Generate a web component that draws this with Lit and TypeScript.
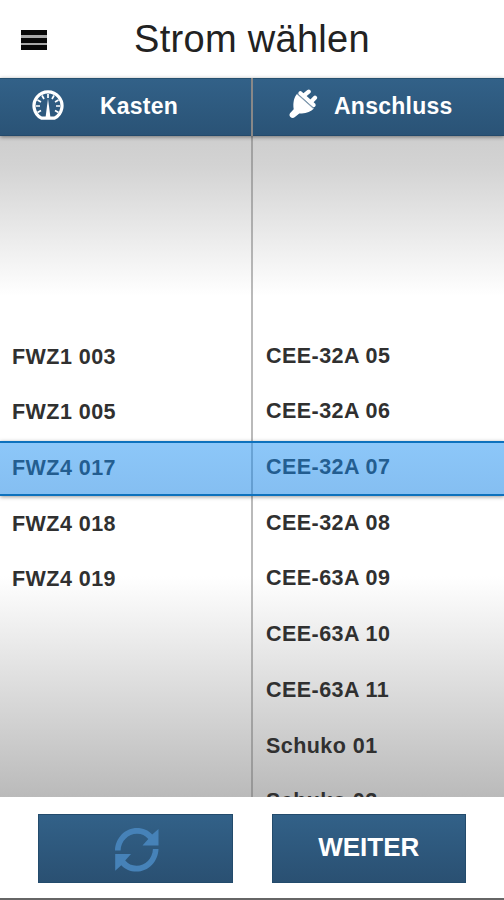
import { LitElement, html, css } from "lit";
import { customElement, state } from "lit/decorators.js";
import { classMap } from "lit/directives/class-map.js";

const BOXES = ["FWZ1 003", "FWZ1 005", "FWZ4 017", "FWZ4 018", "FWZ4 019"];
const PORTS = [
  "CEE-32A 05", "CEE-32A 06", "CEE-32A 07", "CEE-32A 08", "CEE-63A 09",
  "CEE-63A 10", "CEE-63A 11", "Schuko 01", "Schuko 02",
];

const gauge = html`<svg class="gauge" viewBox="0 0 32 32">
  <path d="M9.5 28.2A14 14 0 1 1 22.5 28.2Z" fill="none" stroke="#fff" stroke-width="3.2" stroke-linejoin="round"/>
  <path d="M16 8.5L18.4 27H13.6Z" fill="#fff"/>
  <path d="M16 4v4M10 5.5l2 3.5M22 5.5l-2 3.5M5.5 10l3.5 2M26.5 10L23 12M4 16h4M28 16h-4M5.5 22.5L9 20.5M26.5 22.5L23 20.5" stroke="#fff" stroke-width="1.7"/>
</svg>`;

const plug = html`<svg class="plug" viewBox="0 0 30 30">
  <path d="M9.2 4.7L26 19.6C22.5 23 17.5 25.2 11.3 24.4L6.6 28.3C5.6 29.2 3.6 29.2 2.4 28C1.2 26.8 1.2 25 2.2 24L5.7 20.2C4.7 13.2 6.2 8 9.2 4.7Z" fill="#fff"/>
  <path d="M12.4 4.2L25.6 16" stroke="#fff" stroke-width="4.2" stroke-linecap="round"/>
  <path d="M15.8 6.6L20.7 2.6M22.9 13L27 8.8" stroke="#fff" stroke-width="4.2" stroke-linecap="round"/>
  <path d="M9.3 4.9L25.8 19.7" stroke="#7d97ac" stroke-width="1.1"/>
</svg>`;

const refresh = html`<svg class="refresh" viewBox="0 0 44 44">
  <g fill="#4682b8">
    <path d="M0 22.6C.4 10 10 0 22 0C28.2 0 33.4 2.4 37.2 6.4L43.5 1V17.5H27.5L33.3 11C30.3 7.6 26.8 5.8 22 5.8C13.2 5.8 5.8 13.2 5.6 22.6Z"/>
    <path d="M43.5 21C43.1 33.6 33.5 43.6 21.5 43.6C15.3 43.6 10.1 41.2 6.3 37.2L.2 42.8V26H16L10.2 32.6C13.2 36 16.7 37.8 21.5 37.8C30.3 37.8 37.7 30.4 37.9 21Z"/>
  </g>
</svg>`;

@customElement("app-root")
export class AppRoot extends LitElement {
  @state() private selected = 2;

  static styles = css`
    :host {
      display: flex;
      flex-direction: column;
      box-sizing: border-box;
      height: 900px;
      overflow: hidden;
      background: #fff;
      border-bottom: 2px solid #666;
      font-family: "Liberation Sans", Arial, sans-serif;
    }
    header {
      position: relative;
      display: flex;
      align-items: center;
      justify-content: center;
      flex: 0 0 78px;
    }
    .menu {
      position: absolute;
      left: 21px;
      top: 30px;
      width: 26px;
      height: 20px;
      display: flex;
      flex-direction: column;
      justify-content: space-between;
      background: #a8a8a8;
    }
    .menu i { height: 5px; background: #080808; }
    h1 {
      margin: 0;
      font-size: 38px;
      font-weight: 400;
      letter-spacing: 0.3px;
      line-height: 42px;
      color: #222;
    }
    .heads {
      display: grid;
      grid-template-columns: 251px 2px 251px;
      flex: 0 0 58px;
      background: #888;
      position: relative;
      z-index: 1;
      box-shadow: 0 1px 4px rgba(0, 0, 0, 0.45);
    }
    .head {
      display: flex;
      align-items: center;
      box-sizing: border-box;
      background: linear-gradient(#326188, #2a5376);
      border-top: 1px solid #25506f;
      border-bottom: 1px solid #244a6b;
      color: #fff;
      font-size: 23px;
      font-weight: 700;
      line-height: 26px;
      padding-bottom: 2px;
      letter-spacing: 0.2px;
    }
    .head.left { padding-left: 32px; gap: 36px; }
    .head.right { padding-left: 35px; gap: 16px; letter-spacing: 0.25px; }
    .gauge { width: 32px; height: 32px; }
    .plug { width: 30px; height: 30px; margin-top: -4px; }
    .picker {
      position: relative;
      flex: 0 0 661px;
      overflow: hidden;
      display: grid;
      grid-template-columns: 251px 2px 251px;
      background: linear-gradient(#cecece 0, #d3d3d3 30px, #fff 160px, #fff 440px, #bababa 100%);
    }
    .rule { background: rgba(110, 110, 110, 0.48); }
    .list { padding: 192.5px 0 0 12px; }
    .list.ports { padding: 191.7px 0 0 13px; }
    .row {
      height: 55.7px;
      line-height: 57px;
      font-size: 21.5px;
      font-weight: 700;
      letter-spacing: 0.45px;
      color: #303030;
      white-space: nowrap;
    }
    .row.on { color: #303030; }
    .band {
      position: absolute;
      left: 0;
      right: 0;
      top: 305px;
      height: 55px;
      box-sizing: border-box;
      border-top: 2px solid #0d71bd;
      border-bottom: 2px solid #0d71bd;
      background: linear-gradient(rgba(30, 145, 243, 0.51), rgba(15, 128, 228, 0.51));
      box-shadow: 0 1px 4px rgba(0, 0, 0, 0.4);
    }
    footer {
      flex: 1;
      display: flex;
      align-items: flex-start;
      gap: 39px;
      padding: 17px 38px 0;
    }
    button {
      display: flex;
      align-items: center;
      justify-content: center;
      width: 195px;
      height: 69px;
      box-sizing: border-box;
      margin: 0;
      padding: 0 0 2px;
      border: 1px solid #234b6c;
      background: linear-gradient(#326188, #2a5072);
      color: #fff;
      font: 700 26px "Liberation Sans", Arial, sans-serif;
    }
    .refresh { width: 44px; height: 44px; margin: 5px 0 0 4px; }
  `;

  private list(items: string[], cls: string) {
    return html`<div class="list ${cls}">
      ${items.map((t, i) => html`<div class=${classMap({ row: true, on: i === this.selected })}>${t}</div>`)}
    </div>`;
  }

  render() {
    return html`
      <header>
        <div class="menu"><i></i><i></i><i></i></div>
        <h1>Strom wählen</h1>
      </header>
      <div class="heads">
        <div class="head left">${gauge}<span>Kasten</span></div>
        <div></div>
        <div class="head right">${plug}<span>Anschluss</span></div>
      </div>
      <div class="picker">
        ${this.list(BOXES, "boxes")}
        <div class="rule"></div>
        ${this.list(PORTS, "ports")}
        <div class="band"></div>
      </div>
      <footer>
        <button aria-label="Aktualisieren">${refresh}</button>
        <button>WEITER</button>
      </footer>
    `;
  }
}
